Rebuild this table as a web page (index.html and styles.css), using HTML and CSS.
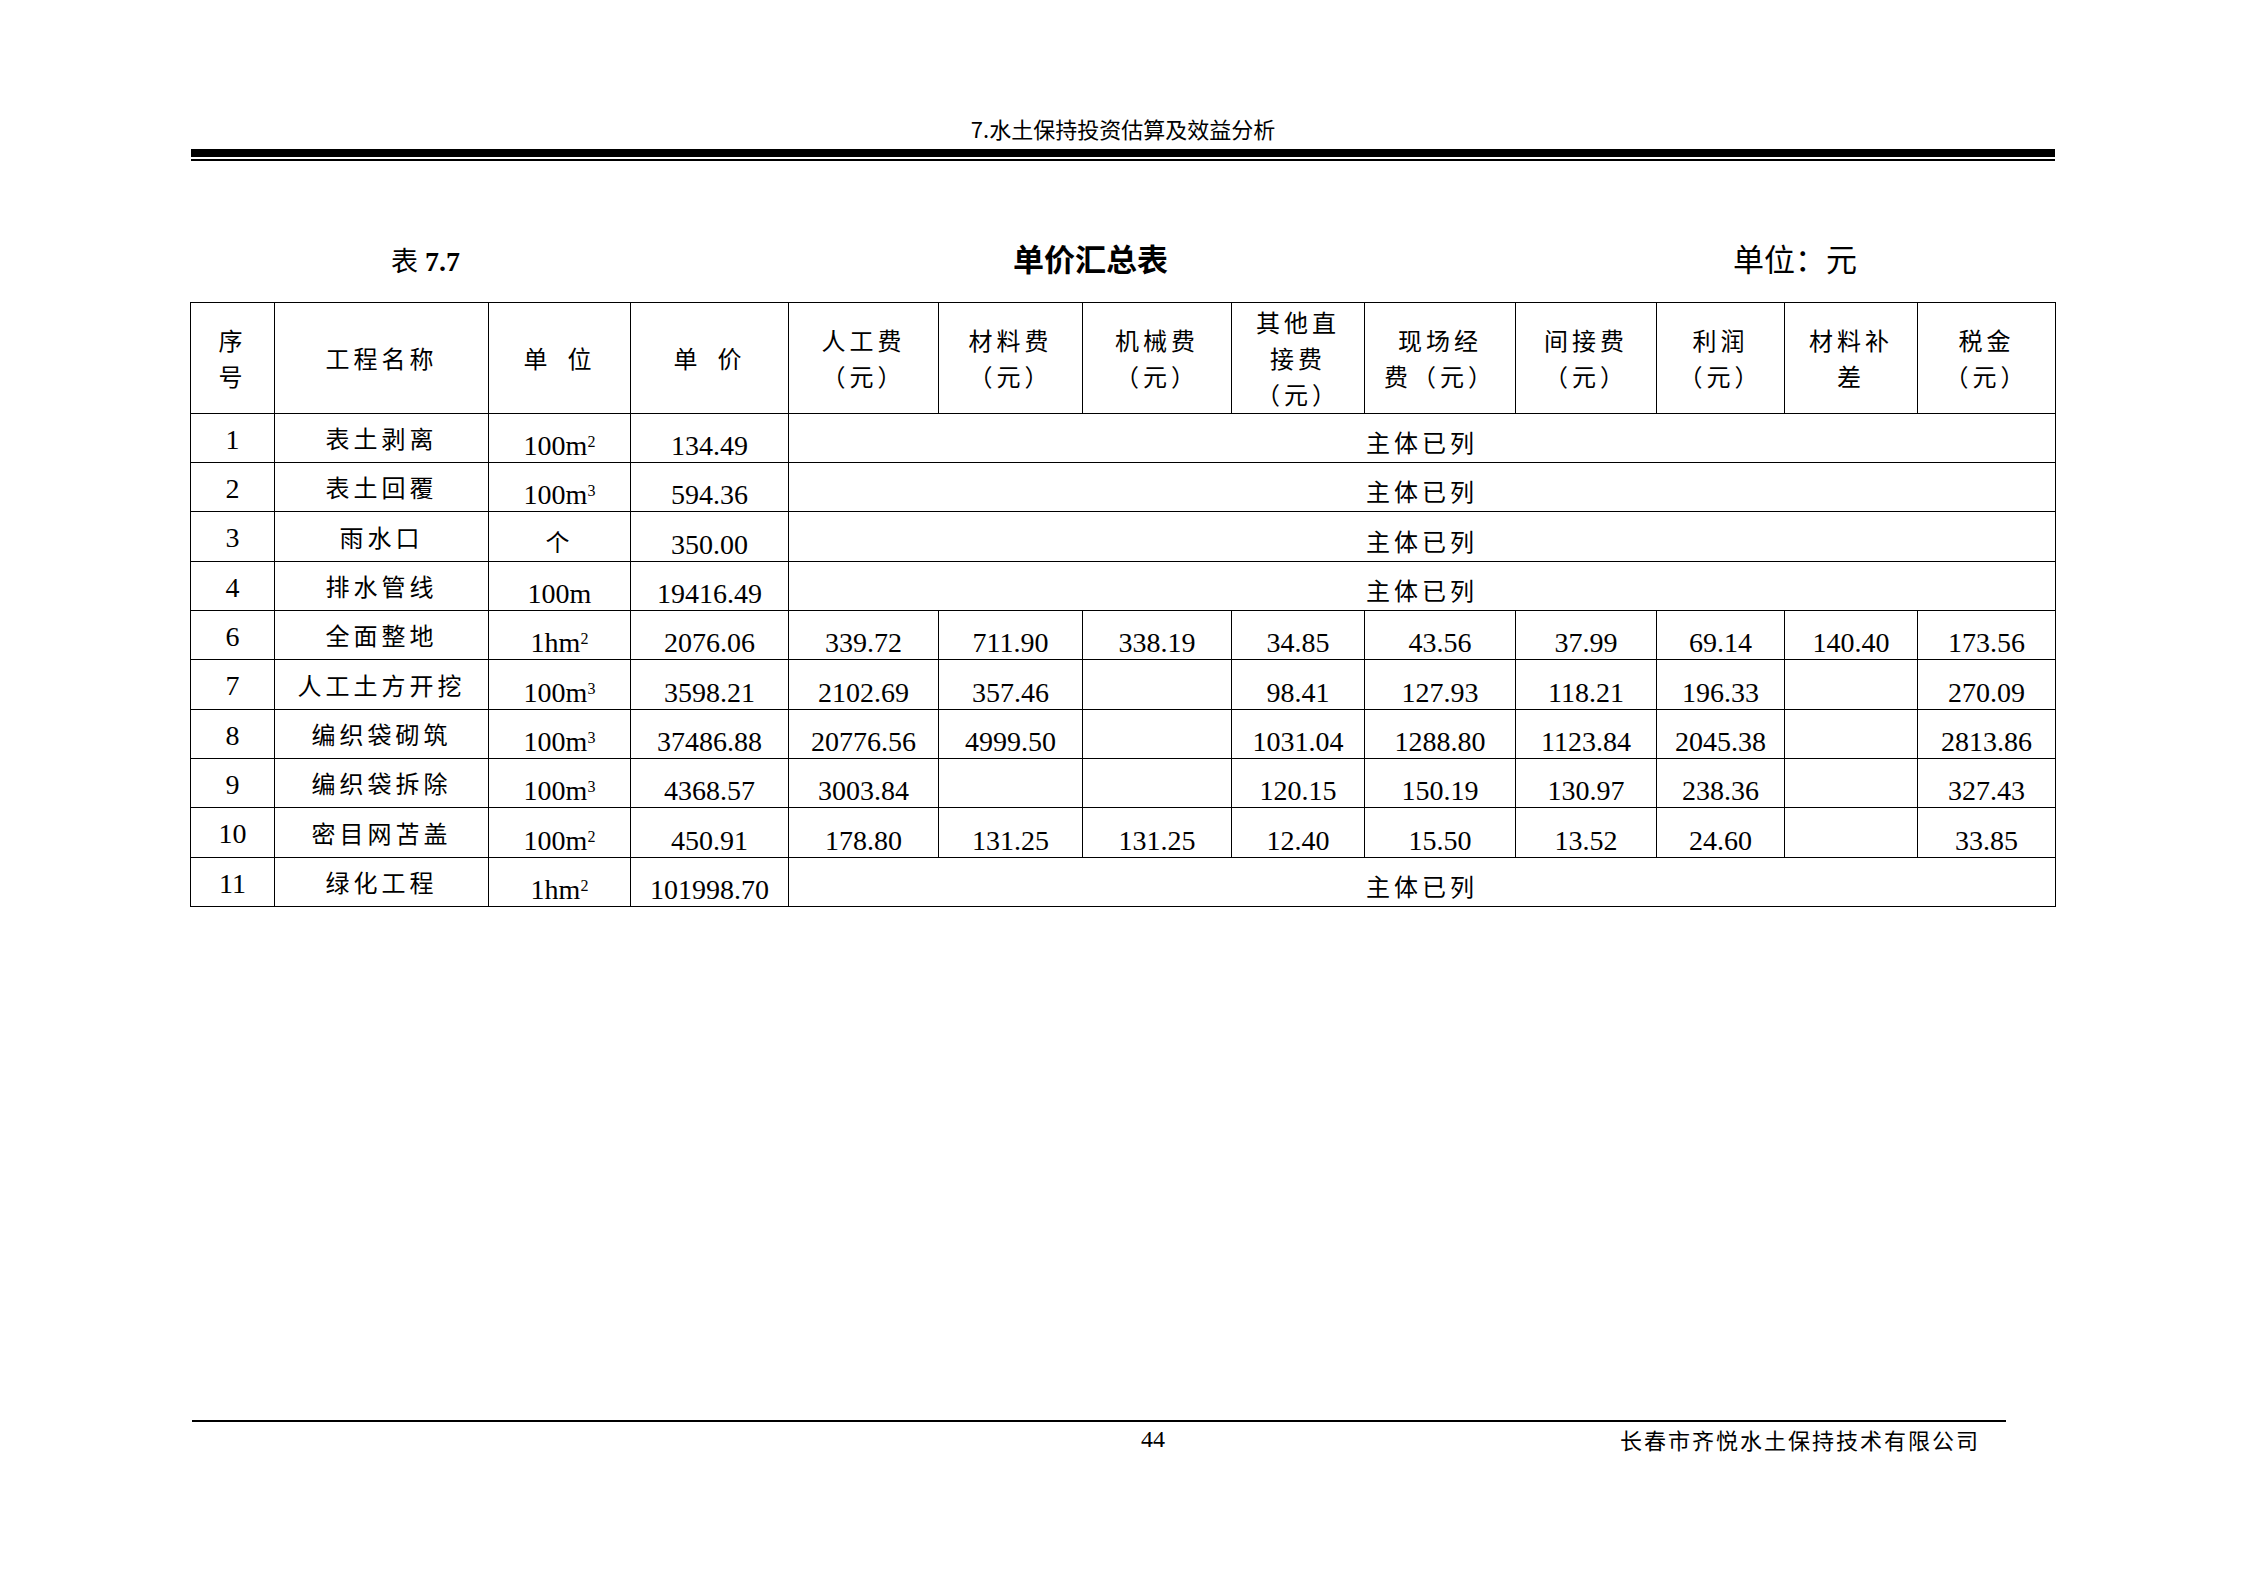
FILE: index.html
```html
<!DOCTYPE html>
<html lang="zh-CN">
<head>
<meta charset="utf-8">
<title>单价汇总表</title>
<link rel="stylesheet" href="styles.css">
</head>
<body>
<div class="page">
  <header class="running-head">7.水土保持投资估算及效益分析</header>
  <div class="rule-thick"></div>
  <div class="rule-thin"></div>

  <div class="caption">
    <div class="cap-no"><span class="cap-zh">表</span> <span class="cap-num">7.7</span></div>
    <div class="cap-title">单价汇总表</div>
    <div class="cap-unit">单位：元</div>
  </div>

  <table class="sheet">
    <colgroup>
      <col style="width:84px"><col style="width:214px"><col style="width:142px"><col style="width:158px">
      <col style="width:150px"><col style="width:144px"><col style="width:149px"><col style="width:133px">
      <col style="width:151px"><col style="width:141px"><col style="width:128px"><col style="width:133px">
      <col style="width:138px">
    </colgroup>
    <thead>
      <tr>
        <th>序<br>号</th>
        <th>工程名称</th>
        <th>单&ensp;位</th>
        <th>单&ensp;价</th>
        <th>人工费<br>（元）</th>
        <th>材料费<br>（元）</th>
        <th>机械费<br>（元）</th>
        <th>其他直<br>接费<br>（元）</th>
        <th>现场经<br>费（元）</th>
        <th>间接费<br>（元）</th>
        <th>利润<br>（元）</th>
        <th>材料补<br>差</th>
        <th>税金<br>（元）</th>
      </tr>
    </thead>
    <tbody>
      <tr>
        <td class="seq">1</td><td class="name">表土剥离</td><td class="num">100m<sup>2</sup></td><td class="num">134.49</td>
        <td class="listed" colspan="9">主体已列</td>
      </tr>
      <tr>
        <td class="seq">2</td><td class="name">表土回覆</td><td class="num">100m<sup>3</sup></td><td class="num">594.36</td>
        <td class="listed" colspan="9">主体已列</td>
      </tr>
      <tr class="tall">
        <td class="seq">3</td><td class="name">雨水口</td><td class="unit-zh">个</td><td class="num">350.00</td>
        <td class="listed" colspan="9">主体已列</td>
      </tr>
      <tr>
        <td class="seq">4</td><td class="name">排水管线</td><td class="num">100m</td><td class="num">19416.49</td>
        <td class="listed" colspan="9">主体已列</td>
      </tr>
      <tr>
        <td class="seq">6</td><td class="name">全面整地</td><td class="num">1hm<sup>2</sup></td><td class="num">2076.06</td>
        <td class="num">339.72</td><td class="num">711.90</td><td class="num">338.19</td><td class="num">34.85</td>
        <td class="num">43.56</td><td class="num">37.99</td><td class="num">69.14</td><td class="num">140.40</td><td class="num">173.56</td>
      </tr>
      <tr class="tall">
        <td class="seq">7</td><td class="name">人工土方开挖</td><td class="num">100m<sup>3</sup></td><td class="num">3598.21</td>
        <td class="num">2102.69</td><td class="num">357.46</td><td class="num"></td><td class="num">98.41</td>
        <td class="num">127.93</td><td class="num">118.21</td><td class="num">196.33</td><td class="num"></td><td class="num">270.09</td>
      </tr>
      <tr>
        <td class="seq">8</td><td class="name">编织袋砌筑</td><td class="num">100m<sup>3</sup></td><td class="num">37486.88</td>
        <td class="num">20776.56</td><td class="num">4999.50</td><td class="num"></td><td class="num">1031.04</td>
        <td class="num">1288.80</td><td class="num">1123.84</td><td class="num">2045.38</td><td class="num"></td><td class="num">2813.86</td>
      </tr>
      <tr>
        <td class="seq">9</td><td class="name">编织袋拆除</td><td class="num">100m<sup>3</sup></td><td class="num">4368.57</td>
        <td class="num">3003.84</td><td class="num"></td><td class="num"></td><td class="num">120.15</td>
        <td class="num">150.19</td><td class="num">130.97</td><td class="num">238.36</td><td class="num"></td><td class="num">327.43</td>
      </tr>
      <tr class="tall">
        <td class="seq">10</td><td class="name">密目网苫盖</td><td class="num">100m<sup>2</sup></td><td class="num">450.91</td>
        <td class="num">178.80</td><td class="num">131.25</td><td class="num">131.25</td><td class="num">12.40</td>
        <td class="num">15.50</td><td class="num">13.52</td><td class="num">24.60</td><td class="num"></td><td class="num">33.85</td>
      </tr>
      <tr>
        <td class="seq">11</td><td class="name">绿化工程</td><td class="num">1hm<sup>2</sup></td><td class="num">101998.70</td>
        <td class="listed" colspan="9">主体已列</td>
      </tr>
    </tbody>
  </table>

  <footer class="page-foot">
    <span class="page-no">44</span>
    <span class="company">长春市齐悦水土保持技术有限公司</span>
  </footer>
</div>
</body>
</html>
```

FILE: styles.css
```css
html, body {
  margin: 0;
  padding: 0;
  background: #ffffff;
}

.page {
  width: 2245px;
  height: 1587px;
  display: flex;
  flex-direction: column;
  color: #000;
  font-family: "Liberation Serif", "Noto Sans CJK SC", serif;
}

.running-head {
  margin: 116px 0 0 191px;
  width: 1864px;
  text-align: center;
  font-family: "Noto Sans CJK SC", sans-serif;
  font-size: 22px;
  line-height: 24px;
}

.rule-thick {
  margin: 9px 0 0 191px;
  width: 1864px;
  height: 8px;
  background: #000;
}

.rule-thin {
  margin: 2px 0 0 191px;
  width: 1864px;
  height: 2px;
  background: #000;
}

.caption {
  margin: 81px 0 0 190px;
  padding-left: 201px;
  display: grid;
  grid-template-columns: 622px 720px auto;
  align-items: baseline;
  line-height: 32px;
}

.cap-no {
  font-size: 28px;
}

.cap-zh {
  font-family: "Noto Sans CJK SC", sans-serif;
  font-size: 27px;
}

.cap-num {
  font-family: "Liberation Serif", serif;
  font-weight: bold;
  font-size: 28px;
}

.cap-title {
  font-family: "Noto Sans CJK SC", sans-serif;
  font-weight: bold;
  font-size: 31px;
}

.cap-unit {
  font-family: "Noto Sans CJK SC", sans-serif;
  font-size: 31px;
}

.sheet {
  margin: 24px 0 0 190px;
  width: 1865px;
  table-layout: fixed;
  border-collapse: collapse;
}

.sheet th,
.sheet td {
  border: 1px solid #000;
  padding: 0;
  text-align: center;
}

.sheet thead tr {
  height: 111px;
}

.sheet th {
  font-family: "Noto Sans CJK SC", sans-serif;
  font-weight: normal;
  font-size: 24px;
  line-height: 36px;
  letter-spacing: 4px;
  vertical-align: middle;
}

.sheet tbody tr {
  height: 49px;
}

.sheet tbody tr.tall {
  height: 50px;
}

.sheet td {
  font-size: 28px;
  line-height: 28px;
}

.sheet td.seq {
  vertical-align: top;
  padding-top: 12px;
}

.sheet td.name {
  font-family: "Noto Sans CJK SC", sans-serif;
  font-size: 24px;
  letter-spacing: 4px;
  vertical-align: middle;
}

.sheet td.num {
  vertical-align: bottom;
  padding-bottom: 2px;
}

.sheet td.unit-zh,
.sheet td.listed {
  font-family: "Noto Sans CJK SC", sans-serif;
  font-size: 24px;
  letter-spacing: 4px;
  vertical-align: bottom;
  padding-bottom: 6px;
}

.sheet sup {
  font-size: 16px;
  line-height: 0;
  vertical-align: 8px;
}

.page-foot {
  margin: 513px 0 0 192px;
  width: 1814px;
  border-top: 2px solid #000;
  padding-top: 5px;
  display: flex;
  align-items: flex-start;
  line-height: 24px;
}

.page-no {
  margin-left: 949px;
  font-family: "Liberation Serif", serif;
  font-size: 24px;
}

.company {
  margin-left: auto;
  margin-right: 26px;
  font-family: "Noto Sans CJK SC", sans-serif;
  font-size: 22px;
  letter-spacing: 2px;
}
```
